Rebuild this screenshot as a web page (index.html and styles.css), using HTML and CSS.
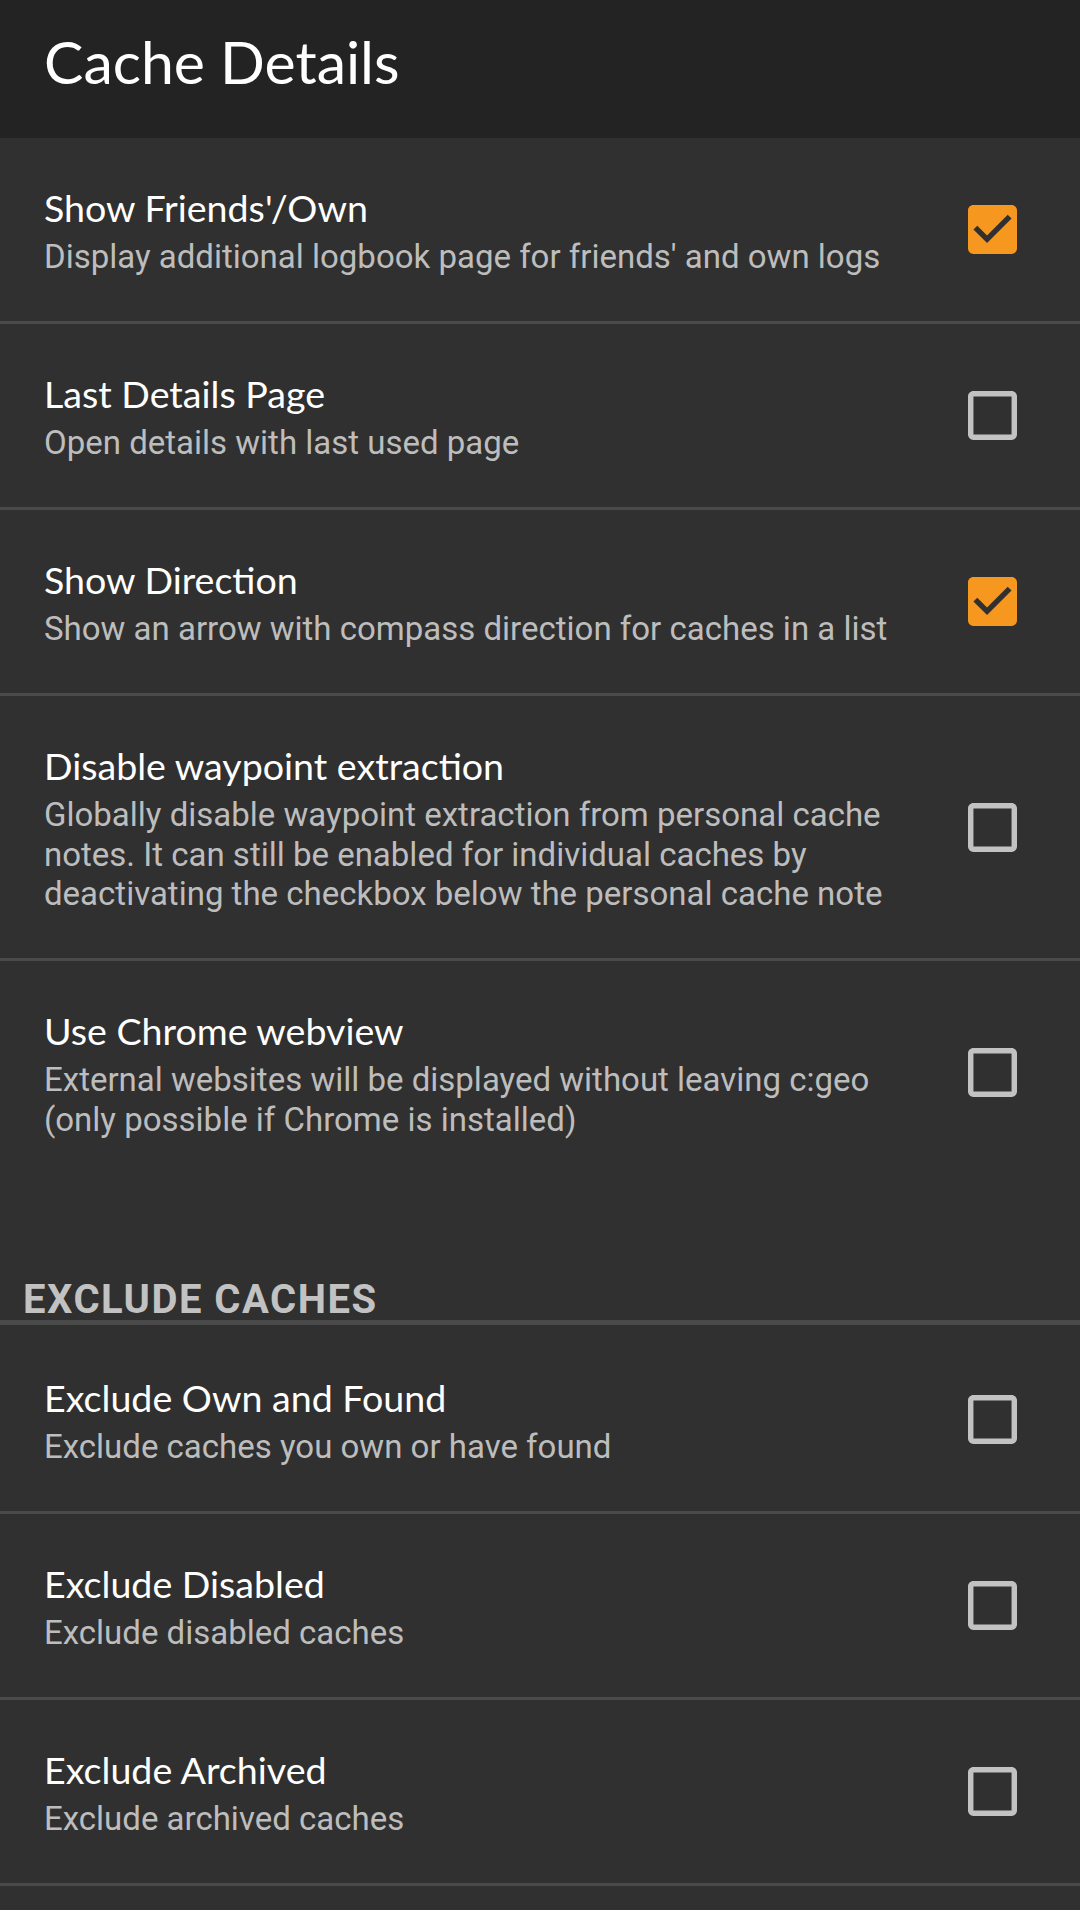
FILE: index.html
```html
<!DOCTYPE html>
<html lang="en">
<head>
<meta charset="utf-8">
<title>Cache Details</title>
<link rel="stylesheet" href="styles.css">
</head>
<body>
<header class="appbar">
  <h1 class="appbar-title">Cache Details</h1>
</header>
<main class="prefs">
  <div class="pref">
    <div class="pref-text">
      <div class="pref-title">Show Friends'/Own</div>
      <div class="pref-summary">Display additional logbook page for friends' and own logs</div>
    </div>
    <div class="pref-widget">
      <svg class="cb" viewBox="3 3 18 18" width="49" height="49"><path class="cb-on" d="M19 3H5c-1.11 0-2 .9-2 2v14c0 1.1.89 2 2 2h14c1.11 0 2-.9 2-2V5c0-1.1-.89-2-2-2zm-9 14l-5-5 1.41-1.41L10 14.17l7.59-7.59L19 8l-9 9z"/></svg>
    </div>
  </div>
  <div class="divider"></div>
  <div class="pref">
    <div class="pref-text">
      <div class="pref-title">Last Details Page</div>
      <div class="pref-summary">Open details with last used page</div>
    </div>
    <div class="pref-widget">
      <svg class="cb" viewBox="3 3 18 18" width="49" height="49"><path class="cb-off" d="M19 5v14H5V5h14m0-2H5c-1.1 0-2 .9-2 2v14c0 1.1.9 2 2 2h14c1.1 0 2-.9 2-2V5c0-1.1-.9-2-2-2z"/></svg>
    </div>
  </div>
  <div class="divider"></div>
  <div class="pref">
    <div class="pref-text">
      <div class="pref-title">Show Direction</div>
      <div class="pref-summary">Show an arrow with compass direction for caches in a list</div>
    </div>
    <div class="pref-widget">
      <svg class="cb" viewBox="3 3 18 18" width="49" height="49"><path class="cb-on" d="M19 3H5c-1.11 0-2 .9-2 2v14c0 1.1.89 2 2 2h14c1.11 0 2-.9 2-2V5c0-1.1-.89-2-2-2zm-9 14l-5-5 1.41-1.41L10 14.17l7.59-7.59L19 8l-9 9z"/></svg>
    </div>
  </div>
  <div class="divider"></div>
  <div class="pref">
    <div class="pref-text">
      <div class="pref-title">Disable waypoint extraction</div>
      <div class="pref-summary">Globally disable waypoint extraction from personal cache notes. It can still be enabled for individual caches by deactivating the checkbox below the personal cache note</div>
    </div>
    <div class="pref-widget">
      <svg class="cb" viewBox="3 3 18 18" width="49" height="49"><path class="cb-off" d="M19 5v14H5V5h14m0-2H5c-1.1 0-2 .9-2 2v14c0 1.1.9 2 2 2h14c1.1 0 2-.9 2-2V5c0-1.1-.9-2-2-2z"/></svg>
    </div>
  </div>
  <div class="divider"></div>
  <div class="pref">
    <div class="pref-text">
      <div class="pref-title">Use Chrome webview</div>
      <div class="pref-summary">External websites will be displayed without leaving c:geo (only possible if Chrome is installed)</div>
    </div>
    <div class="pref-widget">
      <svg class="cb" viewBox="3 3 18 18" width="49" height="49"><path class="cb-off" d="M19 5v14H5V5h14m0-2H5c-1.1 0-2 .9-2 2v14c0 1.1.9 2 2 2h14c1.1 0 2-.9 2-2V5c0-1.1-.9-2-2-2z"/></svg>
    </div>
  </div>

  <div class="category">EXCLUDE CACHES</div>
  <div class="divider divider-thick"></div>

  <div class="pref">
    <div class="pref-text">
      <div class="pref-title">Exclude Own and Found</div>
      <div class="pref-summary">Exclude caches you own or have found</div>
    </div>
    <div class="pref-widget">
      <svg class="cb" viewBox="3 3 18 18" width="49" height="49"><path class="cb-off" d="M19 5v14H5V5h14m0-2H5c-1.1 0-2 .9-2 2v14c0 1.1.9 2 2 2h14c1.1 0 2-.9 2-2V5c0-1.1-.9-2-2-2z"/></svg>
    </div>
  </div>
  <div class="divider"></div>
  <div class="pref">
    <div class="pref-text">
      <div class="pref-title">Exclude Disabled</div>
      <div class="pref-summary">Exclude disabled caches</div>
    </div>
    <div class="pref-widget">
      <svg class="cb" viewBox="3 3 18 18" width="49" height="49"><path class="cb-off" d="M19 5v14H5V5h14m0-2H5c-1.1 0-2 .9-2 2v14c0 1.1.9 2 2 2h14c1.1 0 2-.9 2-2V5c0-1.1-.9-2-2-2z"/></svg>
    </div>
  </div>
  <div class="divider"></div>
  <div class="pref">
    <div class="pref-text">
      <div class="pref-title">Exclude Archived</div>
      <div class="pref-summary">Exclude archived caches</div>
    </div>
    <div class="pref-widget">
      <svg class="cb" viewBox="3 3 18 18" width="49" height="49"><path class="cb-off" d="M19 5v14H5V5h14m0-2H5c-1.1 0-2 .9-2 2v14c0 1.1.9 2 2 2h14c1.1 0 2-.9 2-2V5c0-1.1-.9-2-2-2z"/></svg>
    </div>
  </div>
  <div class="divider"></div>
</main>
</body>
</html>
```

FILE: styles.css
```css
html, body {
  margin: 0;
  padding: 0;
}
body {
  background: #303030;
  width: 1080px;
  height: 1910px;
  overflow: hidden;
  font-family: Roboto, "Liberation Sans", sans-serif;
}
.appbar {
  background: #232323;
  height: 138px;
  box-sizing: border-box;
  padding: 26px 0 0 44px;
}
.appbar-title {
  margin: 0;
  font-family: Lato, "Open Sans", sans-serif;
  font-weight: 400;
  font-size: 59px;
  line-height: 72px;
  color: #ffffff;
}
.prefs {
  display: flex;
  flex-direction: column;
}
.pref {
  display: flex;
  align-items: center;
  padding: 0 63px 0 44px;
}
.pref-text {
  width: 870px;
  padding: 46px 0 44.5px;
}
.pref-title {
  font-family: Lato, "Open Sans", sans-serif;
  font-size: 37.6px;
  line-height: 48px;
  color: #ffffff;
}
.pref-summary {
  margin-top: 5px;
  font-family: Roboto, sans-serif;
  font-size: 33px;
  line-height: 39.5px;
  color: #bdbdbd;
}
.pref-widget {
  margin-left: auto;
  display: flex;
  align-items: center;
}
.cb {
  display: block;
}
.cb-on {
  fill: #f6971f;
}
.cb-off {
  fill: #c2c2c2;
}
.divider {
  height: 3px;
  background: #4a4a4a;
}
.divider-thick {
  height: 5px;
  margin-bottom: 3px;
}
.category {
  padding: 95px 0 0 23px;
  font-family: Roboto, sans-serif;
  font-weight: 700;
  font-size: 40px;
  line-height: 41px;
  letter-spacing: 1.5px;
  color: #c2c2c2;
}
```
